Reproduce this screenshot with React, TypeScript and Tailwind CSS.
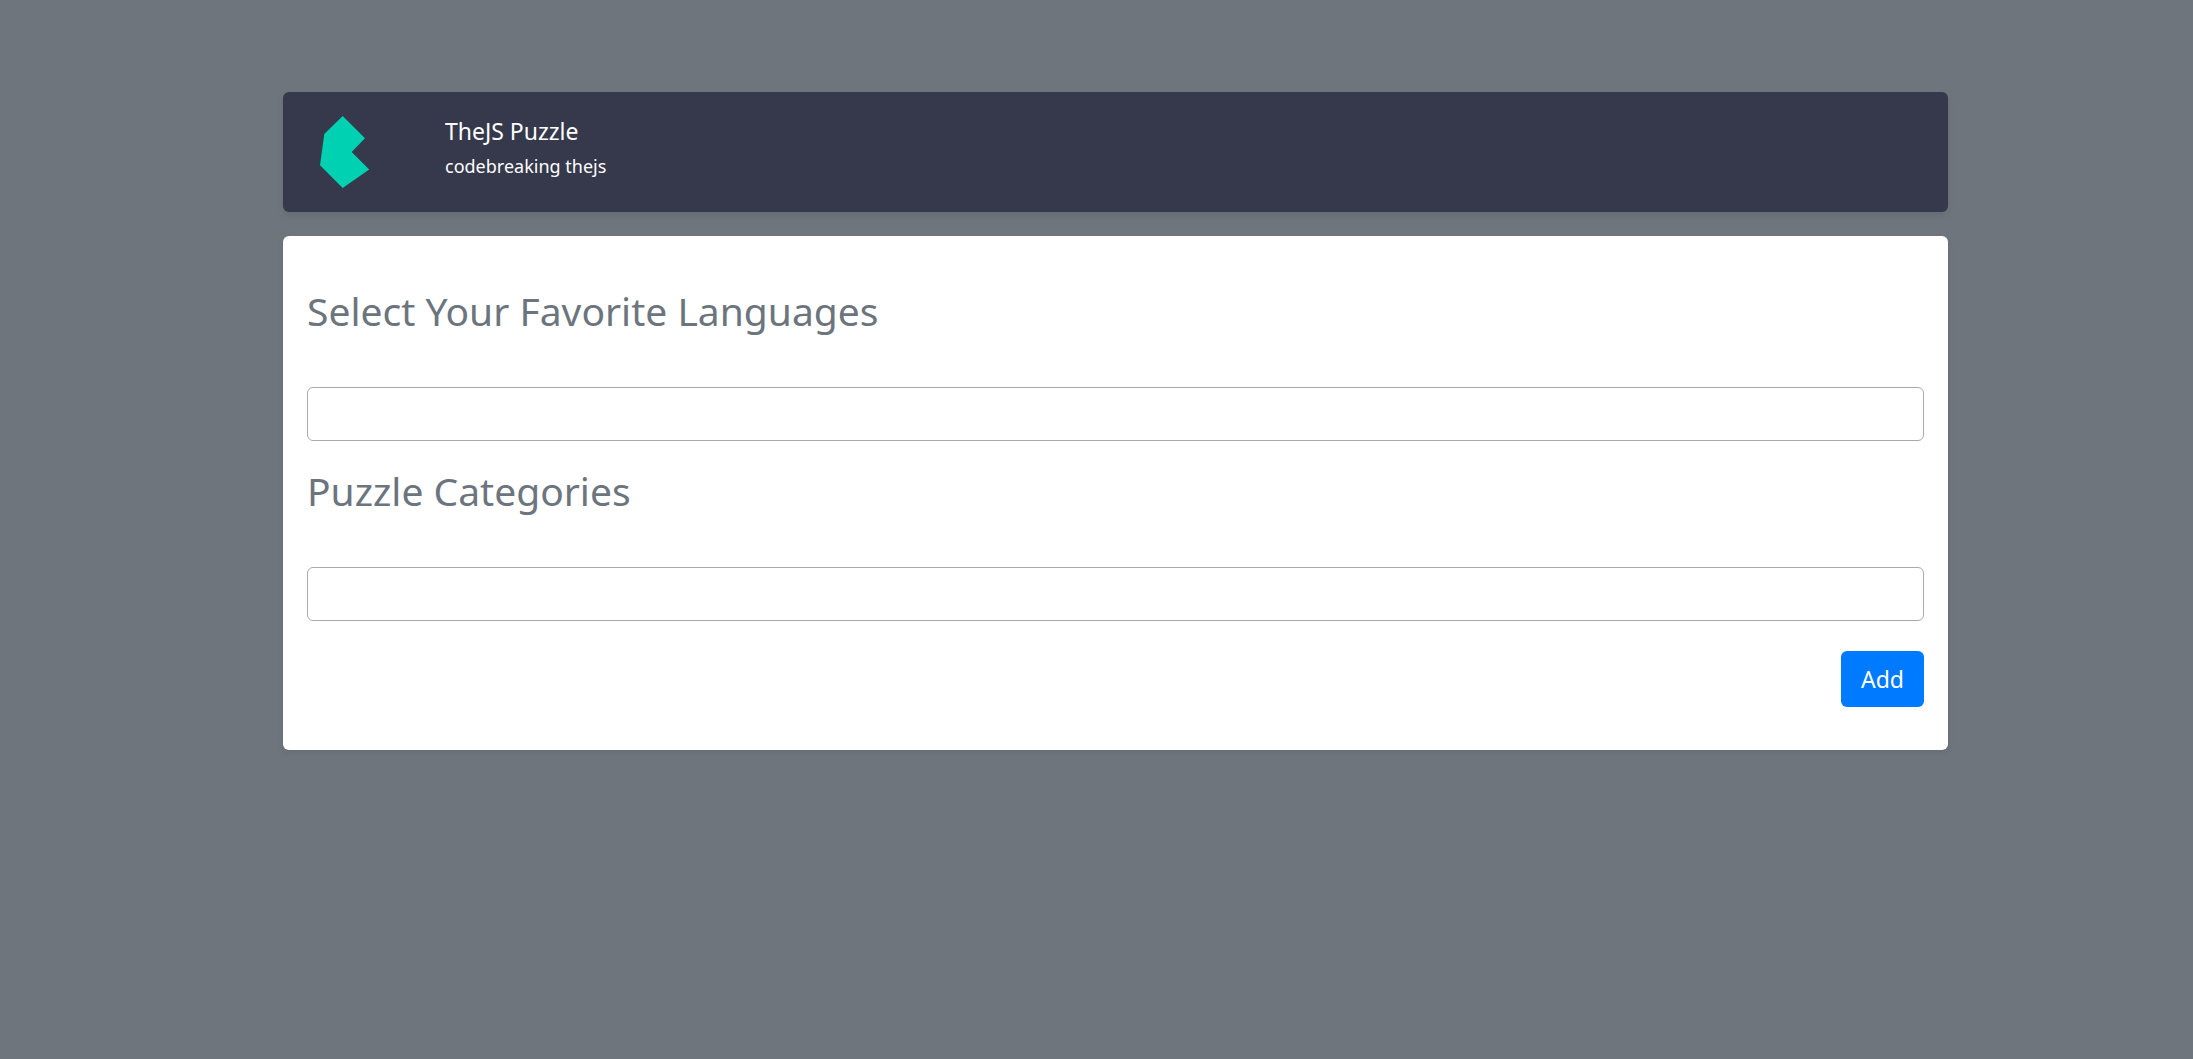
import React, { useState } from "react";

function Logo() {
  return (
    <svg width="50" height="72" viewBox="0 0 50 72" aria-label="Logo" role="img">
      <path fill="#00d1b2" d="M22.7 0 45 22.3 31.7 36 49.2 53.5 22.7 72 0 49.3 4.3 18Z" />
    </svg>
  );
}

type FieldProps = { id: string; label: string };

function Field({ id, label }: FieldProps) {
  const [value, setValue] = useState("");
  return (
    <div>
      <label htmlFor={id} className="mb-[54px] block text-[39px] leading-[44px] text-[#6c757d]">
        {label}
      </label>
      <input
        id={id}
        type="text"
        value={value}
        onChange={(e) => setValue(e.target.value)}
        className="block h-[54px] w-full rounded-md border border-[#aaa] bg-white px-3 text-2xl text-gray-700"
      />
    </div>
  );
}

export default function App() {
  return (
    <div className="min-h-screen bg-[#6e757c] pt-[92px] pl-[38px] font-['Noto_Sans',sans-serif]">
      <main className="mx-auto flex max-w-[1665px] flex-col gap-6">
        <header className="flex items-start gap-[75px] rounded-md bg-[#35394b] px-[37px] py-6 text-white shadow-[0_3px_6px_rgba(0,0,0,0.075)]">
          <Logo />
          <div>
            <h1 className="text-[23px] leading-[30px]">TheJS Puzzle</h1>
            <p className="text-lg leading-10">codebreaking thejs</p>
          </div>
        </header>
        <form
          onSubmit={(e) => e.preventDefault()}
          className="rounded-md bg-white px-6 pt-[53px] pb-[43px] shadow-[0_3px_6px_rgba(0,0,0,0.075)]"
        >
          <div className="flex flex-col gap-7">
            <Field id="languages" label="Select Your Favorite Languages" />
            <Field id="categories" label="Puzzle Categories" />
          </div>
          <div className="mt-[30px] flex justify-end">
            <button type="submit" className="h-14 rounded-md bg-[#007bff] px-5 text-[23px] text-white">
              Add
            </button>
          </div>
        </form>
      </main>
    </div>
  );
}
